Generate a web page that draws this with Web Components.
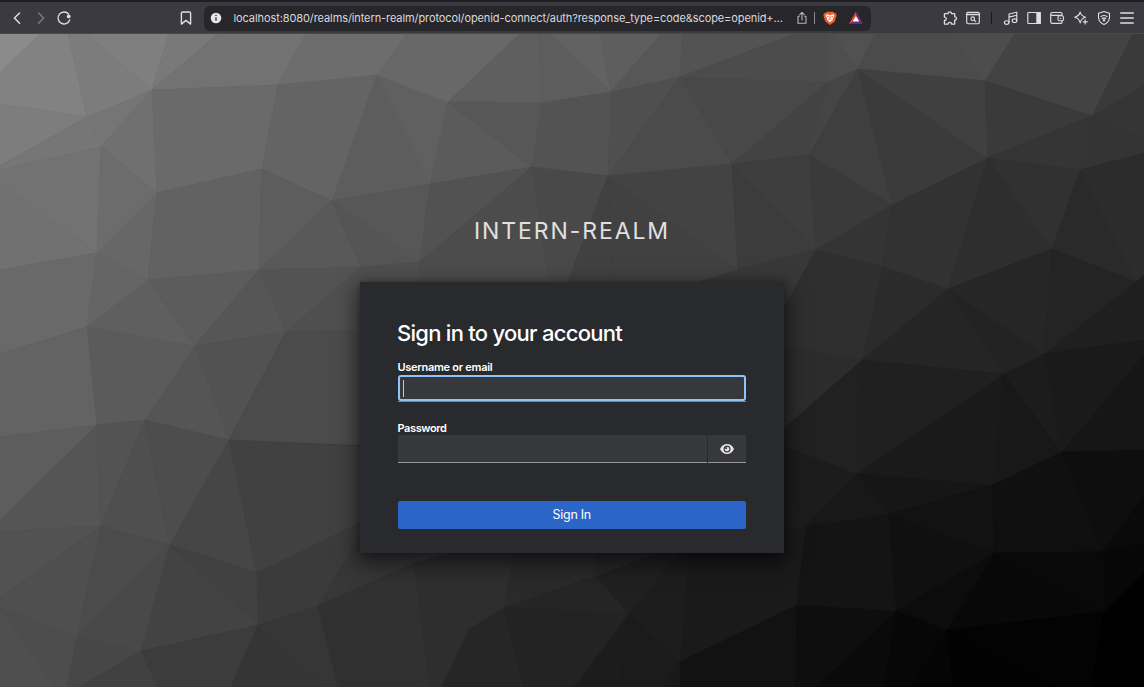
<!DOCTYPE html>
<html lang="en">
<head>
<meta charset="utf-8">
<title>Sign in to intern-realm</title>
<style>
html,body{margin:0;height:100%;background:#1a1a1a;overflow:hidden}
body{font-family:Inter,"Liberation Sans",sans-serif}
</style>
</head>
<body>
<auth-page></auth-page>
<script>
const define = (name, html, setup) => customElements.define(name, class extends HTMLElement {
  constructor() {
    super();
    const t = document.createElement('template');
    t.innerHTML = html;
    this.attachShadow({mode: 'open'}).append(t.content.cloneNode(true));
  }
  connectedCallback() { if (setup) setup(this, this.shadowRoot); }
});

/* ---------- toolbar icons ---------- */
const ICONS = {
  back: '<path d="M10.6 3 5.4 8l5.2 5.2" stroke-width="1.5"/>',
  forward: '<path d="M5.6 3 10.6 8l-5 5.2" stroke-width="1.4" stroke="#7d7c82"/>',
  reload: '<path d="M12.6 4A6 6 0 1 0 13.7 10" stroke-width="1.4"/><circle cx="12.7" cy="6.4" r="1.9" fill="#dededf" stroke="none"/>',
  bookmark: '<path d="M3.4 3.2c0-.8.5-1.2 1.2-1.2h6.8c.7 0 1.2.4 1.2 1.2v10.9L8 10.4l-4.6 3.7z" stroke-width="1.4"/>',
  info: '<circle cx="8" cy="8" r="5.3" fill="#e6e6e8" stroke="none"/><path d="M8 7.3v3.4M8 4.8v1.200" stroke="#27262b" stroke-width="1.3" stroke-linecap="butt"/>',
  share: '<path d="M5.3 6.3H4v7h8v-7h-1.300M8 10V2.700M5.700 4.600 8 2.300l2.300 2.300" stroke="#b7b7bb" stroke-width="1.1"/>',
  brave: '<path d="M4.700 1.700h6.600l1 1.300 1.600-.1.700 2.600-1.800 6L8 14.900l-4.800-3.400-1.800-6 .7-2.600 1.600.1z" fill="#ee5a2b" stroke="none"/><path d="M4.500 4.300 8 4.900l3.500-.6 1 1.700-1.800 2.400.3 1.400L8 12.300 5 9.800l.3-1.400L3.500 6z" fill="#fff" stroke="none"/><path d="M5.200 6.400l1.700.7M10.800 6.400l-1.700.7M6.700 9.700 8 9l1.300.7M8 6v2.500" stroke="#ee5a2b" stroke-width=".8"/>',
  bat: '<path d="M8 1.500 1 14H8V9z" fill="#ef4a28" stroke="none"/><path d="M8 1.500l7 12.500L11 11 8 6z" fill="#8c2a78" stroke="none"/><path d="M1 14 5 11.200h6L15 14z" fill="#5b2c91" stroke="none"/><path d="M8 6 4.700 11.400h6.600z" fill="#fff" stroke="none"/>',
  puzzle: '<path d="M3 3.500h3.200C5.700 1.200 9.800 1.200 9.400 3.500h3.300v3.300c2.400-.4 2.400 3.400 0 3.200v4H9.500c.3-2.200-3.600-2.200-3.300 0H2.400v-3.600c2.500.3 2.500-3.500 0-3.200V4.100q0-.6.600-.6z" stroke-width="1.250"/>',
  tabsearch: '<rect x="1.700" y="2.400" width="12.600" height="11.300" rx="1.200"/><path d="M1.700 4.400h12.600" stroke-width="1.500"/><circle cx="7.700" cy="8.700" r="1.800"/><path d="m9.200 10.200 1.500 1.500"/>',
  music: '<ellipse cx="3.700" cy="12.500" rx="2.300" ry="1.800"/><ellipse cx="11.500" cy="10.700" rx="2.300" ry="1.800"/><path d="M6 12.500V4l7.800-1.800v8.500M6 7.100l7.800-1.800"/>',
  sidebar: '<rect x="1.800" y="2.500" width="12.400" height="11" rx=".8"/><path d="M10.900 2.500h3.300v11h-3.300z" fill="#e2e2e4"/>',
  wallet: '<path d="M13 5V3.700q0-1.200-1.200-1.200H3.200Q1.700 2.500 1.700 4v7.700q0 1.600 1.600 1.600h8.500q1.300 0 1.300-1.300v-1.300M1.800 4.300q.2 1 1.500 1h9.500"/><rect x="9" y="5.700" width="5.500" height="5" rx="1.500"/><path d="M11.300 8.200h.6"/>',
  sparkle: '<path d="M7.200 2q.8 4 5.400 5.300-4.600 1.200-5.400 5.700Q6.300 8.500 1.700 7.300 6.300 6 7.200 2zM12.200 9.700v4.200M10.100 11.800h4.200"/>',
  shield: '<path d="M8 1.500 13.500 3.300v4.400Q13 12.200 8 14.600 3 12.200 2.500 7.700V3.300z"/><path d="M4.900 6.600q3.100-2.200 6.200 0M6.100 8.500q1.900-1.300 3.800 0"/><circle cx="8" cy="10.200" r=".7" fill="#dededf"/>',
  menu: '<path d="M1.700 3h12.600M1.700 8h12.600M1.700 13h12.600" stroke-width="1.400"/>'
};
define('tool-icon', `<style>:host{display:block;width:16px;height:16px;flex:none}svg{display:block}</style>
<svg width="16" height="16" viewBox="0 0 16 16" fill="none" stroke="#dededf" stroke-width="1.150" stroke-linecap="round" stroke-linejoin="round"></svg>`,
(h, r) => { r.querySelector('svg').innerHTML = ICONS[h.getAttribute('name')]; });

define('address-bar', `<style>
:host{display:flex;align-items:center;box-sizing:border-box;width:667px;height:25px;border-radius:6px;background:#27262b;padding:0 7px 0 4px;flex:none}
.u{margin-left:9.500px;width:560px;font-size:11px;line-height:16px;letter-spacing:-.095px;color:#d9d9dc;white-space:nowrap}
.s{width:1px;height:12px;background:#8b8a90;margin:0 7px 0 4px}
.g{margin-left:10px}
</style><tool-icon name="info"></tool-icon><span class="u"><slot></slot></span><tool-icon name="share"></tool-icon><span class="s"></span><tool-icon name="brave"></tool-icon><tool-icon class="g" name="bat"></tool-icon>`);

define('browser-toolbar', `<style>
:host{display:flex;align-items:center;box-sizing:border-box;height:34px;padding:2px 0 0 9px;background:linear-gradient(#1f1e23 0 2px,#3b3a40 2px 33px,#4a494e 33px)}
nav,.r{display:flex;align-items:center;gap:7px;flex:none}
nav{gap:7.500px}
.r{margin-left:70.500px;gap:7.200px}
.b{margin:0 10px 0 106px}
.s{width:1px;height:12px;background:#19191c;margin:0 4px 0 3px}
</style>
<nav><tool-icon name="back"></tool-icon><tool-icon name="forward"></tool-icon><tool-icon name="reload"></tool-icon></nav>
<tool-icon class="b" name="bookmark"></tool-icon>
<address-bar>localhost:8080/realms/intern-realm/protocol/openid-connect/auth?response_type=code&amp;scope=openid+...</address-bar>
<div class="r"><tool-icon name="puzzle"></tool-icon><tool-icon name="tabsearch"></tool-icon><span class="s"></span><tool-icon name="music"></tool-icon><tool-icon name="sidebar"></tool-icon><tool-icon name="wallet"></tool-icon><tool-icon name="sparkle"></tool-icon><tool-icon name="shield"></tool-icon><tool-icon name="menu"></tool-icon></div>`);

/* ---------- faceted backdrop: shade, then the corners of each facet ---------- */
const FACETS = `
139 0,34 40,34 0,73
130 40,34 68,34 87,117 0,104 0,73
124 68,34 87,34 152,90 87,117
127 87,34 169,34 152,90
121 169,34 218,34 152,90
114 218,34 306,34 278,85 152,90
109 306,34 407,34 377,75 278,85
125 0,104 87,117 0,166
118 0,166 87,117 101,147 0,170
117 87,117 152,90 101,147
112 152,90 157,193 101,147
106 152,90 278,85 262,169 157,193
100 278,85 377,75 332,201 262,169
93 377,75 430,184 332,201
96 377,75 448,102 430,184
114 0,170 101,147 97,253 0,184
113 0,184 97,253 0,270
108 101,147 157,193 97,253
103 157,193 148,280 97,253
98 157,193 262,169 259,270 148,280
93 262,169 332,201 259,270
89 332,201 361,267 259,270
85 332,201 420,262 361,267
87 332,201 430,184 420,262
105 0,270 97,253 87,327 0,354
101 97,253 148,280 87,327
95 87,327 148,280 195,346
92 148,280 259,270 195,346
86 259,270 286,332 195,346
83 259,270 361,267 286,332
79 361,267 420,262 420,330 286,332
99 0,354 87,327 97,425 0,437
91 87,327 195,346 145,420 97,425
85 195,346 229,440 145,420
82 195,346 286,332 229,440
75 286,332 420,329 420,447 229,440
93 0,437 97,425 0,521
85 97,425 101,526 0,532 0,521
83 97,425 145,420 101,526
79 145,420 170,545 101,526
77 145,420 229,440 170,545
82 0,532 101,526 0,598
79 0,598 101,526 77,637 0,608
75 101,526 170,545 77,637
73 170,545 141,651 77,637
70 170,545 229,440 257,573
65 229,440 370,447 370,518 257,573
65 170,545 257,573 258,625
67 170,545 258,625 141,651
77 0,608 77,637 67,687 55,687
79 0,608 55,687 0,687
71 77,637 141,651 80,687 67,687
65 141,651 158,687 80,687
60 141,651 258,625 231,687 158,687
59 257,573 370,518 318,606 258,625
55 370,518 420,560 318,606
53 258,625 264,687 231,687
53 258,625 325,687 264,687
54 258,625 318,606 338,687 325,687
48 318,606 420,687 338,687
49 318,606 414,563 430,687 420,687
104 407,34 520,34 448,102 377,75
95 520,34 539,34 542,103 448,102
93 539,34 551,34 611,92 542,103
98 551,34 600,34 611,92
94 600,34 661,34 611,92
87 661,34 683,34 680,77 611,92
83 683,34 795,34 680,77
91 448,102 532,167 430,184
87 448,102 542,103 532,167
83 542,103 611,92 608,176 532,167
79 611,92 680,77 608,176
82 430,184 532,167 420,262
76 532,167 555,292 415,292 420,262
73 532,167 608,176 565,290 550,290
75 680,77 732,164 608,176
72 680,77 828,82 732,164
76 680,77 795,34 827,34 828,82
65 608,176 738,270 695,290 613,290
65 608,176 613,290 565,290
67 608,176 732,164 738,270
60 732,164 816,250 738,270
56 738,270 816,250 784,330 690,330 690,285
78 827,34 833,34 858,69 828,82
81 833,34 875,34 858,69
75 875,34 950,34 985,81 858,69
77 950,34 1015,34 985,81
67 828,82 809,155 732,164
69 828,82 858,69 809,155
62 732,164 809,155 816,250
63 858,69 892,205 809,155
59 858,69 988,158 892,205
64 858,69 985,81 988,158
67 1015,34 1133,34 1092,116 985,81
58 985,81 1092,116 988,158
58 1133,34 1144,34 1144,86 1092,116
53 1092,116 1144,86 1144,141
52 1092,116 1144,141 1144,153 1080,170
53 988,158 1092,116 1080,170
58 809,155 892,205 816,250
52 892,205 883,267 816,250
50 892,205 948,289 883,267
50 892,205 988,158 948,289
46 988,158 1052,249 948,289
49 988,158 1080,170 1052,249
44 1080,170 1144,153 1144,275 1136,282
42 1080,170 1136,282 1052,249
47 816,250 883,267 862,360 780,346 780,315
43 883,267 948,289 862,360
37 948,289 1004,374 862,360
35 948,289 1044,354 1004,374
38 948,289 1052,249 1044,354
36 1052,249 1136,282 1044,354
31 1136,282 1144,275 1144,340 1044,354
44 780,345 862,360 780,432
33 862,360 857,474 770,441 780,432
32 862,360 1004,374 857,474
26 1004,374 993,485 857,474
24 1004,374 1062,452 993,485
28 1004,374 1044,354 1062,452
26 1044,354 1144,340 1144,355 1062,452
22 1144,355 1144,450 1062,452
28 770,441 857,474 805,527
29 770,441 805,527 770,533
24 857,474 889,514 805,527
22 857,474 993,485 889,514
18 993,485 994,553 889,514
15 993,485 1103,552 994,553
16 993,485 1062,452 1103,552
14 1062,452 1144,450 1144,495 1103,552
10 1144,495 1144,543 1103,552
7 1103,552 1144,543 1144,573 1104,612
20 805,527 889,514 896,611 796,605
16 889,514 994,553 896,611
12 994,553 947,630 896,611
8 994,553 1104,612 947,630
9 994,553 1103,552 1104,612
1 1144,573 1144,640 1104,612
0 1104,612 1144,640 1144,687 1090,687
3 947,630 1104,612 1090,687 1055,687
2 947,630 1055,687 953,687
5 947,630 953,687 908,687
7 896,611 947,630 908,687 883,687
10 896,611 883,687 815,687
14 796,605 896,611 815,687 795,687
18 796,605 795,687 680,687 680,661
26 770,533 805,527 796,605 680,661 688,540
46 414,563 504,540 517,550 504,608 469,629 442,687 430,687
42 517,540 597,540 595,576 504,608
38 504,608 469,629 442,687 524,687
37 504,608 595,576 629,614
35 504,608 629,614 574,687 524,687
32 595,576 680,545 690,540 629,614
39 595,576 597,540 690,540 680,545
29 629,614 690,540 680,661
28 629,614 620,687 574,687
27 629,614 680,661 664,687 620,687
25 680,661 680,687 664,687`.trim().split('\n');

define('facet-backdrop', `<style>:host{display:block}svg{display:block;width:1144px;height:653px}</style>
<svg viewBox="0 34 1144 653"><rect y="34" width="1144" height="653" fill="#3a3a3a"/></svg>`, (h, r) => {
  const svg = r.querySelector('svg');
  for (const line of FACETS) {
    const [v, ...pts] = line.split(' ');
    const p = document.createElementNS('http://www.w3.org/2000/svg', 'polygon');
    const c = `rgb(${v},${v},${v})`;
    p.setAttribute('points', pts.join(' '));
    p.setAttribute('fill', c);
    p.setAttribute('stroke', c);
    p.setAttribute('stroke-width', '.7');
    p.setAttribute('stroke-linejoin', 'round');
    svg.append(p);
  }
});

/* ---------- form ---------- */
define('text-field', `<style>
:host{display:block}
label{display:block;font-size:11px;font-weight:600;line-height:15px;color:#fff;letter-spacing:-.280px}
:host([secret]) label{line-height:17px;height:15px;letter-spacing:-.4px}
.row{display:flex;gap:1px;height:28px}
.in{flex:1;box-sizing:border-box;background:#37383b;border-bottom:1px solid #95969a;display:flex;align-items:center}
.eye{width:38px;box-sizing:border-box;background:#37383b;border-bottom:1px solid #95969a;display:flex;align-items:center;justify-content:center}
:host(:not([secret])) .eye{display:none}
:host([focused]) .row{height:27px;background:linear-gradient(#4b91dc,#4b91dc) 0 100%/100% 1px no-repeat}
:host([focused]) .in{border:2px solid #8fc2f7;border-radius:3px;padding-left:3px;margin:0 .5px;height:26px}
.caret{display:none;width:1px;height:17px;background:#c7c7ca}
:host([focused]) .caret{display:block}
</style><label><slot></slot></label><div class="row"><div class="in"><span class="caret"></span></div><div class="eye"><svg width="14" height="12" viewBox="0 0 14 12"><path d="M0 6Q2.500 1 7 1t7 5q-2.500 5-7 5T0 6z" fill="#e7e7e9"/><circle cx="7" cy="6" r="3.500" fill="#37383b"/><circle cx="7" cy="6" r="2.350" fill="#e7e7e9"/><circle cx="6.100" cy="5.100" r="1.100" fill="#37383b"/></svg></div></div>`);

define('primary-button', `<style>:host{display:block}button{display:block;width:100%;height:28px;border:0;border-radius:2px;background:#2b65c7;color:#fff;font:400 12.500px/28px Inter,sans-serif;letter-spacing:-.3px;padding:0}</style><button><slot></slot></button>`);

define('login-card', `<style>
:host{display:block;box-sizing:border-box;width:424px;height:271px;background:#292a2d;padding:36px 38px 0 37.500px;box-shadow:0 8px 20px 3px rgba(0,0,0,.55),0 0 5px rgba(0,0,0,.25)}
h1{margin:0 0 0 -.5px;font-size:22px;font-weight:500;line-height:30px;letter-spacing:-.730px;color:#fff;white-space:nowrap}
.a{margin-top:12px}.b{margin-top:18px}.c{margin-top:38px}
</style><h1><slot></slot></h1>
<text-field class="a" focused>Username or email</text-field>
<text-field class="b" secret>Password</text-field>
<primary-button class="c">Sign In</primary-button>`);

define('auth-page', `<style>
:host{display:block;width:1144px;height:687px;overflow:hidden}
main{display:grid;height:653px}
main>*{grid-area:1/1}
.f{display:flex;flex-direction:column;align-items:center;z-index:1}
.t{margin-top:181px;height:32px;margin-bottom:35px;font-size:23px;line-height:32px;letter-spacing:1.900px;color:#e0e0e0;white-space:nowrap}
</style><browser-toolbar></browser-toolbar><main><facet-backdrop></facet-backdrop><div class="f"><div class="t">INTERN-REALM</div><login-card>Sign in to your account</login-card></div></main>`);
</script>
</body>
</html>
